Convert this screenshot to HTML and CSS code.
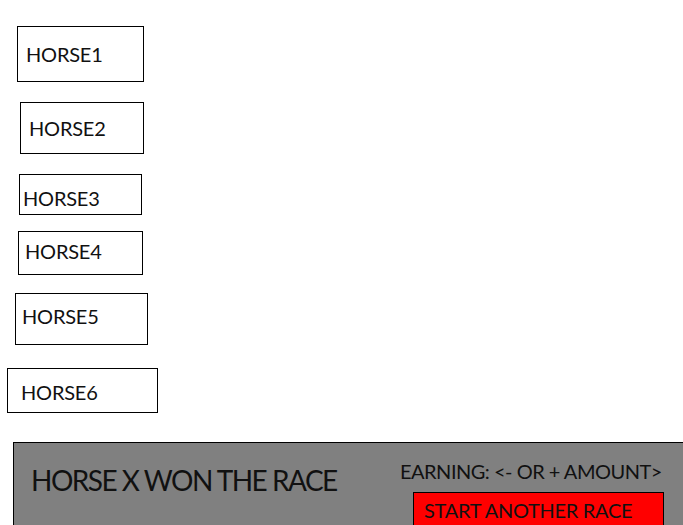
FILE: index.html
```html
<!DOCTYPE html>
<html>
<head>
<meta charset="utf-8">
<link rel="stylesheet" href="styles.css">
</head>
<body>
<div class="horses">
  <div class="horse h1">HORSE1</div>
  <div class="horse h2">HORSE2</div>
  <div class="horse h3">HORSE3</div>
  <div class="horse h4">HORSE4</div>
  <div class="horse h5">HORSE5</div>
  <div class="horse h6">HORSE6</div>
</div>
<div class="result">
  <div class="winner">HORSE X WON THE RACE</div>
  <div class="side">
    <div class="earning">EARNING: &lt;- OR + AMOUNT&gt;</div>
    <div class="again">START ANOTHER RACE</div>
  </div>
</div>
</body>
</html>
```
FILE: styles.css
```css
html, body {
  margin: 0;
  padding: 0;
  background: #fff;
  overflow: hidden;
  height: 525px;
}
body {
  font-family: "Lato", "Open Sans", sans-serif;
  color: #111;
}
.horses {
  display: flex;
  flex-direction: column;
  align-items: flex-start;
  padding-top: 26px;
}
.horse {
  box-sizing: border-box;
  border: 1px solid #000;
  font-size: 20px;
  line-height: 20px;
  letter-spacing: -0.2px;
  display: flex;
  align-items: center;
}
.h1 { margin-left: 17px; width: 127px; height: 56px; padding-left: 8px; }
.h2 { margin-left: 20px; width: 124px; height: 52px; padding-left: 8px; margin-top: 20px; }
.h3 { margin-left: 19px; width: 123px; height: 41px; padding-left: 3px; margin-top: 20px; padding-top: 6px; }
.h4 { margin-left: 18px; width: 125px; height: 44px; padding-left: 6px; margin-top: 16px; padding-bottom: 5px; }
.h5 { margin-left: 15px; width: 133px; height: 52px; padding-left: 6px; margin-top: 18px; padding-bottom: 6px; }
.h6 { margin-left: 7px; width: 151px; height: 45px; padding-left: 13px; margin-top: 23px; padding-top: 2px; }
.result {
  box-sizing: border-box;
  margin-top: 29px;
  margin-left: 13px;
  width: 672px;
  height: 100px;
  background: #808080;
  border: 1px solid #000;
  display: flex;
  justify-content: space-between;
  align-items: flex-start;
}
.winner {
  font-size: 28px;
  line-height: 30px;
  letter-spacing: -1.5px;
  margin-left: 17px;
  margin-top: 22px;
}
.side {
  display: flex;
  flex-direction: column;
  align-items: flex-start;
  margin-right: 20px;
}
.earning {
  font-size: 20px;
  line-height: 22px;
  letter-spacing: -0.5px;
  margin-top: 17px;
}
.again {
  box-sizing: border-box;
  margin-top: 10px;
  margin-left: 13px;
  width: 251px;
  height: 40px;
  background: #ff0000;
  border: 1px solid #000;
  font-size: 20px;
  line-height: 22px;
  letter-spacing: -0.3px;
  padding-left: 10px;
  padding-top: 6px;
}
```
